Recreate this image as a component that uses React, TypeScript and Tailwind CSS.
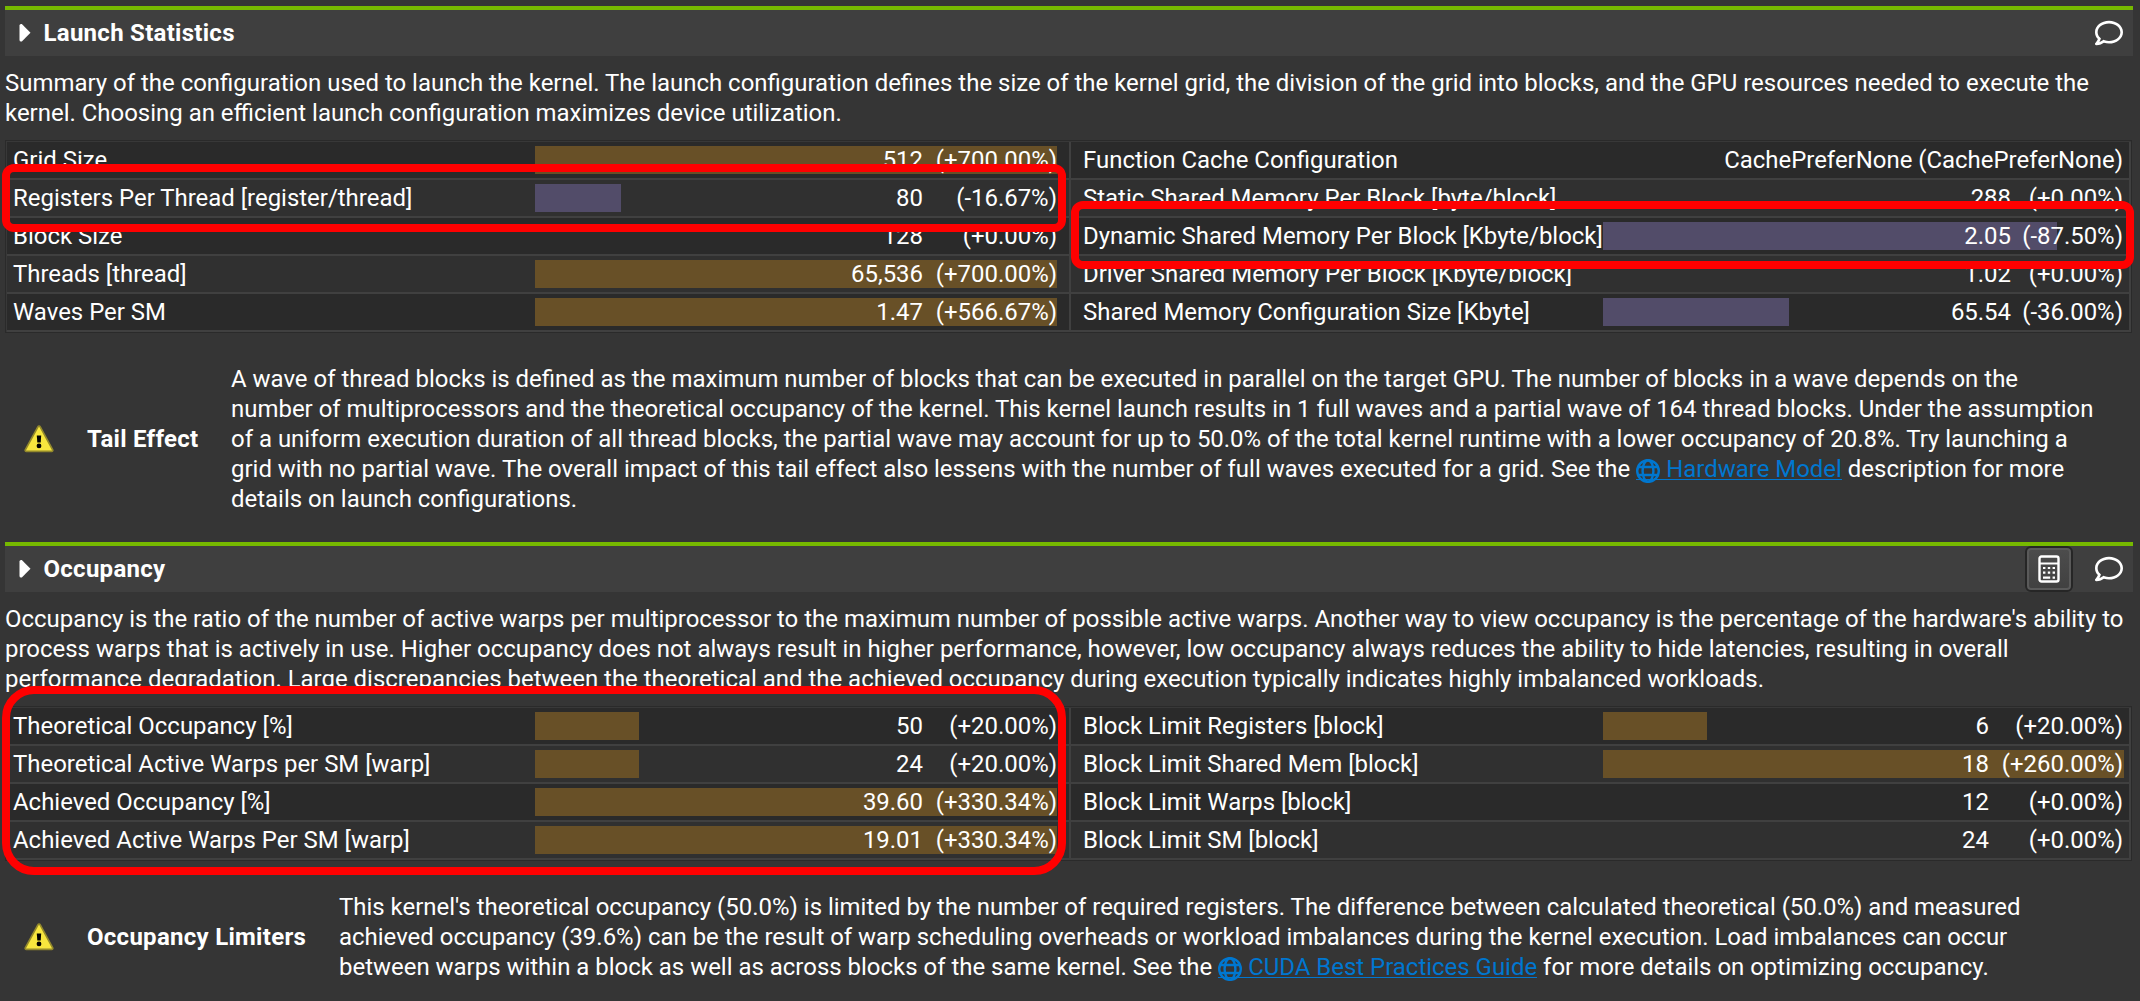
import type { ReactNode } from "react";
import { FaRegComment } from "react-icons/fa";

type Metric = {
  label: string;
  value: string;
  diff?: string;
  bar?: number;
  tone?: "up" | "down";
};

const launchLeft: Metric[] = [
  { label: "Grid Size", value: "512", diff: "(+700.00%)", bar: 522, tone: "up" },
  { label: "Registers Per Thread [register/thread]", value: "80", diff: "(-16.67%)", bar: 86, tone: "down" },
  { label: "Block Size", value: "128", diff: "(+0.00%)" },
  { label: "Threads [thread]", value: "65,536", diff: "(+700.00%)", bar: 522, tone: "up" },
  { label: "Waves Per SM", value: "1.47", diff: "(+566.67%)", bar: 522, tone: "up" },
];

const launchRight: Metric[] = [
  { label: "Function Cache Configuration", value: "CachePreferNone (CachePreferNone)" },
  { label: "Static Shared Memory Per Block [byte/block]", value: "288", diff: "(+0.00%)" },
  { label: "Dynamic Shared Memory Per Block [Kbyte/block]", value: "2.05", diff: "(-87.50%)", bar: 454, tone: "down" },
  { label: "Driver Shared Memory Per Block [Kbyte/block]", value: "1.02", diff: "(+0.00%)" },
  { label: "Shared Memory Configuration Size [Kbyte]", value: "65.54", diff: "(-36.00%)", bar: 186, tone: "down" },
];

const occupancyLeft: Metric[] = [
  { label: "Theoretical Occupancy [%]", value: "50", diff: "(+20.00%)", bar: 104, tone: "up" },
  { label: "Theoretical Active Warps per SM [warp]", value: "24", diff: "(+20.00%)", bar: 104, tone: "up" },
  { label: "Achieved Occupancy [%]", value: "39.60", diff: "(+330.34%)", bar: 522, tone: "up" },
  { label: "Achieved Active Warps Per SM [warp]", value: "19.01", diff: "(+330.34%)", bar: 522, tone: "up" },
];

const occupancyRight: Metric[] = [
  { label: "Block Limit Registers [block]", value: "6", diff: "(+20.00%)", bar: 104, tone: "up" },
  { label: "Block Limit Shared Mem [block]", value: "18", diff: "(+260.00%)", bar: 521, tone: "up" },
  { label: "Block Limit Warps [block]", value: "12", diff: "(+0.00%)" },
  { label: "Block Limit SM [block]", value: "24", diff: "(+0.00%)" },
];

function CalculatorIcon() {
  return (
    <svg width="22" height="28" viewBox="0 0 22 28" fill="none">
      <rect x="1.5" y="1.5" width="19" height="25" rx="2" stroke="#fff" strokeWidth="2.4" />
      <path d="M1.5 8.5h19" stroke="#fff" strokeWidth="2" />
      <path
        d="M5 13h2.4M9.8 13h2.4M14.6 13H17M5 17.7h2.4M9.8 17.7h2.4M14.6 17.7H17M5 22.6h7.2M14.6 22.6H17"
        stroke="#fff"
        strokeWidth="2.2"
      />
    </svg>
  );
}

function WarningIcon() {
  return (
    <svg width="30" height="28" viewBox="0 0 30 28" className="block">
      <path
        d="M13.9 1.9a1.3 1.3 0 0 1 2.3 0l12.5 22.9a1.1 1.1 0 0 1-1 1.6H2.3a1.1 1.1 0 0 1-1-1.6z"
        fill="#f7e63e"
        stroke="#93892c"
        strokeWidth="1.7"
      />
      <path d="M12.8 10.6h4.4l-.5 7h-3.4z" fill="#000" />
      <circle cx="15" cy="20.9" r="2.4" fill="#000" />
    </svg>
  );
}

function GlobeIcon() {
  return (
    <svg
      width="24"
      height="24"
      viewBox="0 0 24 24"
      fill="none"
      stroke="currentColor"
      strokeWidth="2.4"
      className="-my-1 mr-[6px] inline-block align-[-2px]"
    >
      <circle cx="12" cy="12" r="10.8" />
      <ellipse cx="12" cy="12" rx="5.4" ry="10.8" />
      <path d="M1.8 8h20.4M1.8 16h20.4" />
    </svg>
  );
}

function SectionHeader({ title, calculator }: { title: string; calculator?: boolean }) {
  return (
    <div className="flex h-[50px] items-center border-t-4 border-[#76b900] bg-[#3f3f3f] pr-2.5 pl-3.5">
      <svg width="12" height="18" viewBox="0 0 12 18" className="shrink-0">
        <path d="M.5 1.5Q.5 0 2 0h.8L11.5 8.8 2.8 17.6H2Q.5 17.6 .5 16z" fill="#fff" />
      </svg>
      <h2 className="ml-[12.5px] flex-1 font-bold tracking-[0.28px]">{title}</h2>
      {calculator && (
        <button className="mr-[22px] flex h-[46px] w-12 items-center justify-center rounded-md border-2 border-[#262626] bg-[#262626]">
          <span className="flex h-[42px] w-11 items-center justify-center rounded-[4px] border-2 border-[#5a5a5a] bg-linear-to-b from-[#4c4c4c] to-[#414141]">
            <CalculatorIcon />
          </span>
        </button>
      )}
      <FaRegComment size={28} className="mb-px shrink-0 text-white" />
    </div>
  );
}

function Lines({ lines }: { lines: ReactNode[] }) {
  return (
    <div className="text-[23.965px] whitespace-nowrap">
      {lines.map((line, i) => (
        <p key={i} className="h-[30px]">
          {line}
        </p>
      ))}
    </div>
  );
}

function DocLink({ children }: { children: ReactNode }) {
  return (
    <a className="inline-block border-b border-[#0077d0] leading-[20px] text-[#0077d0]">
      <GlobeIcon />
      {children}
    </a>
  );
}

function Column({ rows, side, diffClass }: { rows: Metric[]; side: "left" | "right"; diffClass: string }) {
  const left = side === "left";
  return (
    <div className={left ? "w-[1064px] border-r-2 border-[#404040]" : "w-[1060px] border-r-2 border-[#404040]"}>
      {rows.map((row) => (
        <div
          key={row.label}
          className={
            "flex h-[38px] items-center border-b-2 border-[#404040] text-[23.95px] odd:bg-[#2a2a2a] even:bg-[#303030] " +
            (left ? "pr-3 pl-1.5" : "pr-[5px] pl-3")
          }
        >
          <span className={left ? "w-[522px] shrink-0 whitespace-nowrap" : "w-[520px] shrink-0 whitespace-nowrap"}>
            {row.label}
          </span>
          <div className="grid h-7 flex-1 grid-rows-[28px] items-center leading-7">
            <div
              className={
                "col-start-1 row-start-1 h-7 " + (row.tone === "down" ? "bg-[#565070]/90" : "bg-[#6b5227]/95")
              }
              style={{ width: row.bar ?? 0 }}
            />
            <div
              className={
                "col-start-1 row-start-1 flex justify-end whitespace-nowrap " + (left ? "" : "pr-px")
              }
            >
              <span>{row.value}</span>
              {row.diff && <span className={"text-right " + diffClass}>{row.diff}</span>}
            </div>
          </div>
        </div>
      ))}
    </div>
  );
}

function MetricTable({ left, right, rightDiff }: { left: Metric[]; right: Metric[]; rightDiff: string }) {
  return (
    <div className="mr-px flex border border-[#2a2a2a] bg-[#383838] pt-px pl-px">
      <Column rows={left} side="left" diffClass="w-[134px]" />
      <Column rows={right} side="right" diffClass={rightDiff} />
    </div>
  );
}

function Rule({ title, lines, titleClass }: { title: string; lines: ReactNode[]; titleClass: string }) {
  return (
    <div className="flex items-center pl-[19px]">
      <WarningIcon />
      <h3 className={"ml-[33px] shrink-0 font-bold tracking-[0.28px] " + titleClass}>{title}</h3>
      <Lines lines={lines} />
    </div>
  );
}

function Highlight({ className }: { className: string }) {
  return <div className={"pointer-events-none absolute border-[8px] border-[#ff0000] " + className} />;
}

export default function App() {
  return (
    <div className="relative h-[1001px] w-[2140px] overflow-hidden bg-[#353535] pt-1.5 pr-[7px] pl-[5px] font-['Roboto',sans-serif] text-[24px] leading-[30px] text-white">
      <section>
        <SectionHeader title="Launch Statistics" />
        <div className="pt-3 pb-3">
          <Lines
            lines={[
              "Summary of the configuration used to launch the kernel. The launch configuration defines the size of the kernel grid, the division of the grid into blocks, and the GPU resources needed to execute the",
              "kernel. Choosing an efficient launch configuration maximizes device utilization.",
            ]}
          />
        </div>
        <MetricTable left={launchLeft} right={launchRight} rightDiff="w-[112px]" />
        <div className="pt-[31px] pb-7">
          <Rule
            title="Tail Effect"
            titleClass="w-[144px]"
            lines={[
              "A wave of thread blocks is defined as the maximum number of blocks that can be executed in parallel on the target GPU. The number of blocks in a wave depends on the",
              "number of multiprocessors and the theoretical occupancy of the kernel. This kernel launch results in 1 full waves and a partial wave of 164 thread blocks. Under the assumption",
              "of a uniform execution duration of all thread blocks, the partial wave may account for up to 50.0% of the total kernel runtime with a lower occupancy of 20.8%. Try launching a",
              <>
                grid with no partial wave. The overall impact of this tail effect also lessens with the number of full
                waves executed for a grid. See the <DocLink>Hardware Model</DocLink> description for more
              </>,
              "details on launch configurations.",
            ]}
          />
        </div>
      </section>

      <section>
        <SectionHeader title="Occupancy" calculator />
        <div className="pt-3 pb-3">
          <Lines
            lines={[
              "Occupancy is the ratio of the number of active warps per multiprocessor to the maximum number of possible active warps. Another way to view occupancy is the percentage of the hardware's ability to",
              "process warps that is actively in use. Higher occupancy does not always result in higher performance, however, low occupancy always reduces the ability to hide latencies, resulting in overall",
              "performance degradation. Large discrepancies between the theoretical and the achieved occupancy during execution typically indicates highly imbalanced workloads.",
            ]}
          />
        </div>
        <MetricTable left={occupancyLeft} right={occupancyRight} rightDiff="w-[134px]" />
        <div className="pt-[31px]">
          <Rule
            title="Occupancy Limiters"
            titleClass="w-[252px]"
            lines={[
              "This kernel's theoretical occupancy (50.0%) is limited by the number of required registers. The difference between calculated theoretical (50.0%) and measured",
              "achieved occupancy (39.6%) can be the result of warp scheduling overheads or workload imbalances during the kernel execution. Load imbalances can occur",
              <>
                between warps within a block as well as across blocks of the same kernel. See the{" "}
                <DocLink>CUDA Best Practices Guide</DocLink> for more details on optimizing occupancy.
              </>,
            ]}
          />
        </div>
      </section>

      <Highlight className="top-[164px] left-[2px] h-[68px] w-[1064px] rounded-[12px]" />
      <Highlight className="top-[201px] left-[1071px] h-[68px] w-[1063px] rounded-[12px]" />
      <Highlight className="top-[686px] left-[2px] h-[189px] w-[1064px] rounded-[32px]" />
    </div>
  );
}
